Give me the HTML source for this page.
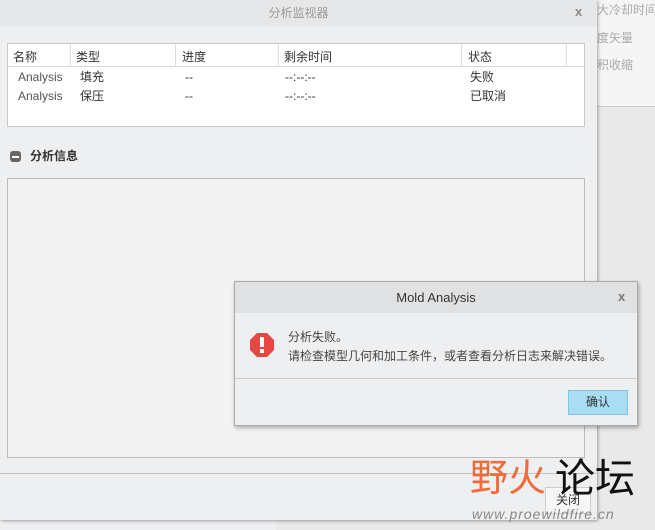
<!DOCTYPE html>
<html><head><meta charset="utf-8"><style>
*{margin:0;padding:0;box-sizing:border-box}
body{width:655px;height:530px;overflow:hidden;position:relative;background:#e9e9ea;font-family:"Liberation Sans","Noto Sans CJK SC",sans-serif;font-size:12px;color:#333;line-height:14px}
.abs{position:absolute;white-space:nowrap}
</style></head><body>
<div class="abs" style="left:596px;top:0;width:59px;height:107px;background:#f5f5f6;border-bottom:1px solid #ccc;overflow:hidden">
<div class="abs" style="left:1px;top:3px;color:#aaa">大冷却时间</div>
<div class="abs" style="left:1px;top:31px;color:#aaa">度矢量</div>
<div class="abs" style="left:1px;top:58px;color:#aaa">积收缩</div>
</div>
<div class="abs" style="left:0;top:518px;width:276px;height:12px;background:#eeeff0"></div>
<div class="abs" style="left:0;top:0;width:597px;height:520px;background:#eeeff1;box-shadow:1px 1px 3px rgba(0,0,0,.35)">
 <div class="abs" style="left:0;top:0;width:597px;height:27px;background:#e6e7e9;text-align:center;line-height:26px;color:#999">分析监视器</div>
 <div class="abs" style="left:575px;top:5px;color:#888;font-weight:bold;font-size:13px">x</div>
 <div class="abs" style="left:7px;top:43px;width:578px;height:84px;background:#fff;border:1px solid #c8c8c8">
  <div class="abs" style="left:0;top:0;width:576px;height:23px;border-bottom:1px solid #d8d8d8"></div>
  <div class="abs" style="left:62px;top:0;width:1px;height:23px;background:#ddd"></div>
  <div class="abs" style="left:167px;top:0;width:1px;height:23px;background:#ddd"></div>
  <div class="abs" style="left:270px;top:0;width:1px;height:23px;background:#ddd"></div>
  <div class="abs" style="left:453px;top:0;width:1px;height:23px;background:#ddd"></div>
  <div class="abs" style="left:558px;top:0;width:1px;height:23px;background:#ddd"></div>
  <div class="abs" style="left:5px;top:6px">名称</div><div class="abs" style="left:68px;top:6px">类型</div>
  <div class="abs" style="left:174px;top:6px">进度</div><div class="abs" style="left:276px;top:6px">剩余时间</div>
  <div class="abs" style="left:460px;top:6px">状态</div>
  <div class="abs" style="left:10px;top:26px;color:#555">Analysis</div><div class="abs" style="left:72px;top:26px">填充</div>
  <div class="abs" style="left:177px;top:26px">--</div><div class="abs" style="left:277px;top:26px">--:--:--</div><div class="abs" style="left:462px;top:26px">失败</div>
  <div class="abs" style="left:10px;top:45px;color:#555">Analysis</div><div class="abs" style="left:72px;top:45px">保压</div>
  <div class="abs" style="left:177px;top:45px">--</div><div class="abs" style="left:277px;top:45px">--:--:--</div><div class="abs" style="left:462px;top:45px">已取消</div>
 </div>
 <div class="abs" style="left:10px;top:151px;width:11px;height:11px;background:#666;border-radius:3px"><div class="abs" style="left:2px;top:5px;width:7px;height:1.5px;background:#fff"></div></div>
 <div class="abs" style="left:30px;top:149px;font-weight:bold">分析信息</div>
 <div class="abs" style="left:7px;top:178px;width:578px;height:280px;background:#f3f3f3;border:1px solid #bbb"></div>
 <div class="abs" style="left:0;top:473px;width:597px;height:1px;background:#c4c4c4"></div>
 <div class="abs" style="left:545px;top:487px;width:46px;height:27px;border:1px solid #ccc;background:#f6f6f6;text-align:center;line-height:25px">关闭</div>
</div>
<div class="abs" style="left:234px;top:281px;width:404px;height:145px;background:#eeeff1;border:1px solid #aaa;box-shadow:1px 2px 4px rgba(0,0,0,.3)">
 <div class="abs" style="left:0;top:0;width:402px;height:31px;background:#e0e1e3;text-align:center;line-height:31px;font-size:13px;color:#333">Mold Analysis</div>
 <div class="abs" style="left:383px;top:8px;color:#777;font-weight:bold;font-size:13px">x</div>
 <svg class="abs" style="left:15px;top:51px" width="24" height="24" viewBox="0 0 24 24"><polygon points="7,0 17,0 24,7 24,17 17,24 7,24 0,17 0,7" fill="#e84545"/><rect x="10" y="4" width="4" height="10" fill="#fff"/><rect x="10" y="16" width="4" height="4" fill="#fff"/></svg>
 <div class="abs" style="left:53px;top:46px;line-height:19px;color:#444">分析失败。<br>请检查模型几何和加工条件，或者查看分析日志来解决错误。</div>
 <div class="abs" style="left:0;top:96px;width:402px;height:1px;background:#ccc"></div>
 <div class="abs" style="left:333px;top:108px;width:60px;height:25px;background:#a8ddf4;border:1px solid #7ec4e2;text-align:center;line-height:23px">确认</div>
</div>
<div class="abs" style="left:470px;top:452px;font-size:38px;color:#f06a3a;font-family:'Noto Sans CJK SC',sans-serif;line-height:46px">野火</div>
<div class="abs" style="left:555px;top:452px;font-size:40px;color:#111;font-family:'Noto Sans CJK SC',sans-serif;line-height:46px">论坛</div>
<div class="abs" style="left:472px;top:507px;font-size:14px;color:#888;font-style:italic;letter-spacing:1px">www.proewildfire.cn</div>
</body></html>
